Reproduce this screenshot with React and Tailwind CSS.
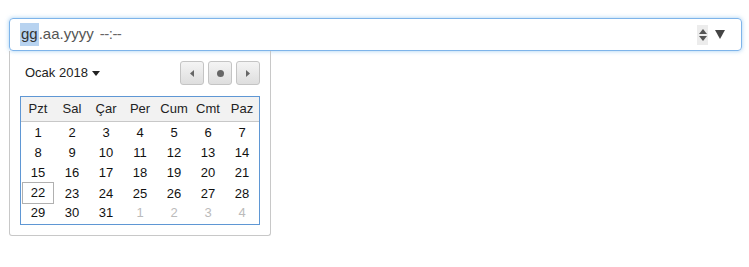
const weeks = [
  [1, 2, 3, 4, 5, 6, 7],
  [8, 9, 10, 11, 12, 13, 14],
  [15, 16, 17, 18, 19, 20, 21],
  [22, 23, 24, 25, 26, 27, 28],
  [29, 30, 31, 1, 2, 3, 4],
];

const days = ['Pzt', 'Sal', 'Çar', 'Per', 'Cum', 'Cmt', 'Paz'];

function NavButton({ children }) {
  return (
    <div className="w-[24px] h-[24px] rounded-[3px] border border-[#c4c4c4] bg-gradient-to-b from-[#f4f4f4] to-[#dedede] flex items-center justify-center">
      {children}
    </div>
  );
}

export default function App() {
  return (
    <div className="w-[749px] h-[267px] bg-white font-['Liberation_Sans',Arial,sans-serif] text-[#222] pt-[18px] pl-[9px] pr-[7px]">
      <div className="h-[33px] rounded-[4px] border border-[#7eb4ea] shadow-[0_0_4px_rgba(102,175,233,0.6)] flex items-center pl-[10px] pr-[16px]">
        <div className="text-[15px] text-[#333] flex items-center">
          <span className="bg-[#b8d3f0] px-[1px]">gg</span>
          <span className="text-[#555]">.aa.yyyy</span>
          <span className="text-[#666] ml-[6px] tracking-[-0.5px]">--:--</span>
        </div>
        <div className="ml-auto flex items-center gap-[7px]">
          <div className="w-[11px] h-[20px] bg-[#ececec] flex flex-col items-center justify-center gap-[2px]">
            <svg width="8" height="5" viewBox="0 0 8 5"><path d="M4 0 L8 5 L0 5 Z" fill="#555" /></svg>
            <svg width="8" height="5" viewBox="0 0 8 5"><path d="M0 0 L8 0 L4 5 Z" fill="#555" /></svg>
          </div>
          <svg width="10" height="9" viewBox="0 0 10 9"><path d="M0 0 L10 0 L5 9 Z" fill="#444" /></svg>
        </div>
      </div>

      <div className="w-[262px] h-[185px] border border-[#c8c8c8] border-t-0 rounded-b-[3px] pt-[10px] px-[10px]">
        <div className="flex items-center justify-between h-[24px]">
          <div className="flex items-center gap-[4px] pl-[5px] text-[13px] text-[#222]">
            <span>Ocak 2018</span>
            <svg width="8" height="5" viewBox="0 0 8 5"><path d="M0 0 L8 0 L4 5 Z" fill="#222" /></svg>
          </div>
          <div className="flex gap-[4px]">
            <NavButton>
              <svg width="4" height="7" viewBox="0 0 4 7"><path d="M4 0 L4 7 L0 3.5 Z" fill="#666" /></svg>
            </NavButton>
            <NavButton>
              <div className="w-[7px] h-[7px] rounded-full bg-[#666]" />
            </NavButton>
            <NavButton>
              <svg width="4" height="7" viewBox="0 0 4 7"><path d="M0 0 L4 3.5 L0 7 Z" fill="#666" /></svg>
            </NavButton>
          </div>
        </div>

        <div className="mt-[11px] w-[240px] border border-[#5f97d4] text-[13px]">
          <div className="grid grid-cols-7 h-[25px] items-center bg-[#f2f2f2] border-b border-[#c8c8c8]">
            {days.map((d) => (
              <div key={d} className="text-center text-[#222]">{d}</div>
            ))}
          </div>
          <div className="pt-[1px] pb-[1px]">
            {weeks.map((w, wi) => (
              <div key={wi} className="grid grid-cols-7 h-[20px]">
                {w.map((n, di) => {
                  const other = wi === 4 && di >= 3;
                  const today = wi === 3 && di === 0;
                  return (
                    <div
                      key={di}
                      className={
                        'flex items-center justify-center ' +
                        (other ? 'text-[#bbb] ' : 'text-[#111] ') +
                        (today ? 'border border-[#b0b0b0] h-[22px] -mt-[1px] mx-[1px]' : '')
                      }
                    >
                      {n}
                    </div>
                  );
                })}
              </div>
            ))}
          </div>
        </div>
      </div>
    </div>
  );
}
